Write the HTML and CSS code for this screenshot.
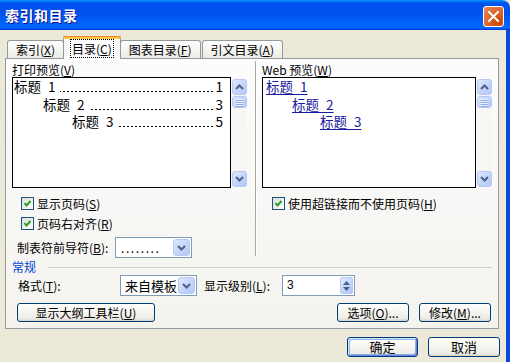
FILE: index.html
```html
<!DOCTYPE html>
<html lang="zh-CN">
<head>
  <meta charset="UTF-8" />
  <title>索引和目录</title>
  <link rel="stylesheet" href="styles.css">
</head>
<body>

  <div class="window">
    <div class="titlebar">
      <span class="title">索引和目录</span>
      <span class="close">
        <svg width="21" height="21" viewBox="0 0 21 21"><path d="M6 6 L15 15 M15 6 L6 15" stroke="#fff" stroke-width="2" stroke-linecap="square"/></svg>
      </span>
    </div>

    <div class="frame">
      <div class="tabs">
        <div class="tab">索引(<u>X</u>)</div>
        <div class="tab active"><span class="focus">目录(<u>C</u>)</span></div>
        <div class="tab">图表目录(<u>F</u>)</div>
        <div class="tab">引文目录(<u>A</u>)</div>
      </div>

      <div class="panel">
        <div class="columns">
          <div class="col col-print">
            <div class="label">打印预览(<u>V</u>)</div>
            <div class="preview">
              <div class="preview-box">
                <div class="toc-line"><span>标题 1</span><span class="leader"></span><span>1</span></div>
                <div class="toc-line lvl2"><span>标题 2</span><span class="leader"></span><span>3</span></div>
                <div class="toc-line lvl3"><span>标题 3</span><span class="leader"></span><span>5</span></div>
              </div>
              <div class="scrollbar">
                <span class="sb-btn"><svg width="9" height="6" viewBox="0 0 9 6"><path d="M1 5 L4.5 1.5 L8 5" fill="none" stroke="#4d6185" stroke-width="2"/></svg></span>
                <span class="sb-thumb"><i></i><i></i><i></i><i></i></span>
                <span class="sb-track"></span>
                <span class="sb-btn"><svg width="9" height="6" viewBox="0 0 9 6"><path d="M1 1 L4.5 4.5 L8 1" fill="none" stroke="#4d6185" stroke-width="2"/></svg></span>
              </div>
            </div>
            <label class="check first"><span class="box"><svg width="11" height="11" viewBox="0 0 11 11"><path d="M2.5 5 L4.5 7.5 L8.5 3" fill="none" stroke="#21a121" stroke-width="2"/></svg></span>显示页码(<u>S</u>)</label>
            <label class="check"><span class="box"><svg width="11" height="11" viewBox="0 0 11 11"><path d="M2.5 5 L4.5 7.5 L8.5 3" fill="none" stroke="#21a121" stroke-width="2"/></svg></span>页码右对齐(<u>R</u>)</label>
            <div class="field leader-field">
              <span class="field-label">制表符前导符(<u>B</u>):</span>
              <div class="select">
                <span class="select-value dots">........</span>
                <span class="drop"><svg width="9" height="6" viewBox="0 0 9 6"><path d="M1 1 L4.5 4.5 L8 1" fill="none" stroke="#4d6185" stroke-width="2"/></svg></span>
              </div>
            </div>
          </div>

          <div class="vsep"></div>

          <div class="col col-web">
            <div class="label">Web 预览(<u>W</u>)</div>
            <div class="preview">
              <div class="preview-box web">
                <div class="web-line"><a>标题 1</a></div>
                <div class="web-line lvl2"><a>标题 2</a></div>
                <div class="web-line lvl3"><a>标题 3</a></div>
              </div>
              <div class="scrollbar">
                <span class="sb-btn"><svg width="9" height="6" viewBox="0 0 9 6"><path d="M1 5 L4.5 1.5 L8 5" fill="none" stroke="#4d6185" stroke-width="2"/></svg></span>
                <span class="sb-thumb"><i></i><i></i><i></i><i></i></span>
                <span class="sb-track"></span>
                <span class="sb-btn"><svg width="9" height="6" viewBox="0 0 9 6"><path d="M1 1 L4.5 4.5 L8 1" fill="none" stroke="#4d6185" stroke-width="2"/></svg></span>
              </div>
            </div>
            <label class="check first"><span class="box"><svg width="11" height="11" viewBox="0 0 11 11"><path d="M2.5 5 L4.5 7.5 L8.5 3" fill="none" stroke="#21a121" stroke-width="2"/></svg></span>使用超链接而不使用页码(<u>H</u>)</label>
          </div>
        </div>

        <div class="group">
          <div class="group-title"><span>常规</span><span class="rule"></span></div>
          <div class="field format-row">
            <span class="field-label">格式(<u>T</u>):</span>
            <div class="select">
              <span class="select-value">来自模板</span>
              <span class="drop"><svg width="9" height="6" viewBox="0 0 9 6"><path d="M1 1 L4.5 4.5 L8 1" fill="none" stroke="#4d6185" stroke-width="2"/></svg></span>
            </div>
            <span class="level-label">显示级别(<u>L</u>):</span>
            <div class="spin">
              <span class="spin-value">3</span>
              <span class="spin-btn">
                <svg width="7" height="4" viewBox="0 0 7 4"><path d="M0 4 L3.5 0 L7 4 Z" fill="#4d6185"/></svg>
                <svg width="7" height="4" viewBox="0 0 7 4"><path d="M0 0 L3.5 4 L7 0 Z" fill="#4d6185"/></svg>
              </span>
            </div>
          </div>
          <div class="button-row">
            <button class="btn outline-btn">显示大纲工具栏(<u>U</u>)</button>
            <span class="spacer"></span>
            <button class="btn small-btn">选项(<u>O</u>)...</button>
            <button class="btn small-btn">修改(<u>M</u>)...</button>
          </div>
        </div>
      </div>

      <div class="footer">
        <button class="btn default">确定</button>
        <button class="btn cancel">取消</button>
      </div>
    </div>
  </div>

</body>
</html>
```

FILE: styles.css
```css
body {
  margin: 0;
  background: #ece9d8;
  font-family: "Noto Sans CJK SC", "DejaVu Sans", sans-serif;
  font-size: 12px;
  color: #000;
}

u {
  text-decoration: underline;
  text-underline-offset: 1px;
}

.window {
  width: 510px;
  height: 362px;
  overflow: hidden;
  background: #ece9d8;
}

/* Title bar */
.titlebar {
  height: 30px;
  display: flex;
  align-items: center;
  justify-content: space-between;
  padding: 0 6px 0 5px;
  border-top-right-radius: 8px;
  background: linear-gradient(to bottom, #0997ff 0%, #0053ee 10%, #0050ee 40%, #0066ff 88%, #0066ff 93%, #005bff 95%, #003dd7 97%, #003dd7 100%);
}

.title {
  color: #fff;
  font-size: 14px;
  font-weight: bold;
  letter-spacing: 0.5px;
  text-shadow: 1px 1px #0f1089;
}

.close {
  width: 21px;
  height: 21px;
  margin-top: 3px;
  box-sizing: border-box;
  border: 1px solid #fff;
  border-radius: 3px;
  background: radial-gradient(circle at 80% 80%, #cc4600 0%, #dc6527 50%, #e48a60 100%);
  display: flex;
  align-items: center;
  justify-content: center;
}

.close svg {
  margin: -1px;
}

/* Client area */
.frame {
  height: 332px;
  border-right: 4px solid #0a48dd;
  padding: 0 7px 0 5px;
}

.tabs {
  height: 28px;
  display: flex;
  align-items: flex-end;
  padding-left: 2px;
  position: relative;
  z-index: 1;
}

.tab {
  height: 17px;
  line-height: 17px;
  padding: 0 8px;
  border: 1px solid #919b9c;
  border-bottom: none;
  border-radius: 3px 3px 0 0;
  background: linear-gradient(#fff, #f3f3ef 60%, #ecebe5);
  white-space: nowrap;
  margin-right: 1px;
}

.tab.active {
  height: 20px;
  line-height: 19px;
  margin: 0 -1px -1px -2px;
  padding: 0 7px;
  border-top: 3px solid #ffc83c;
  background: #fcfcfe;
  position: relative;
}

.tab.active::before {
  content: "";
  position: absolute;
  left: -1px;
  right: -1px;
  top: -3px;
  height: 1px;
  background: #e68b2c;
  border-radius: 2px 2px 0 0;
}

.focus {
  outline: 1px dotted #000;
  outline-offset: 0;
  padding: 0 1px;
}

.panel {
  height: 271px;
  box-sizing: border-box;
  border: 1px solid #919b9c;
  background: linear-gradient(#fcfcfe, #f4f3ee);
  display: flex;
  flex-direction: column;
}

.columns {
  height: 201px;
  display: flex;
}

.col {
  padding-top: 4px;
  display: flex;
  flex-direction: column;
  flex: none;
  min-width: 0;
}

.col-print {
  width: 235px;
  padding-left: 6px;
}

.col-web {
  width: 230px;
  padding-left: 5px;
}

.vsep {
  flex: none;
  width: 0;
  margin: 2px 0 0 8px;
  height: 195px;
  border-left: 1px solid #aca899;
  border-right: 1px solid #fff;
}

.label {
  height: 14px;
  line-height: 14px;
  white-space: nowrap;
}

.preview {
  height: 111px;
  display: flex;
}

.preview-box {
  flex: 1;
  min-width: 0;
  overflow: hidden;
  border: 1px solid #000;
  background: #fff;
  padding: 0 7px 0 1px;
  font-size: 13.5px;
  line-height: 17.5px;
  word-spacing: 4px;
  margin-right: 1px;
}

.col-web .preview-box {
  padding: 0 4px 0 3px;
}

.toc-line {
  display: flex;
  white-space: nowrap;
}

.toc-line span {
  flex: none;
}

/* dotted tab leader between heading and page number */
.toc-line .leader {
  flex: 1 1 0;
  min-width: 0;
  margin: 0 2px 0 4px;
  background-image: radial-gradient(circle, #000 0.75px, transparent 1.1px);
  background-size: 4px 3px;
  background-repeat: repeat-x;
  background-position: right 0 top 12px;
}

.lvl2 {
  padding-left: 29px;
}

.lvl3 {
  padding-left: 58px;
}

.web .lvl2 {
  padding-left: 26px;
}

.web .lvl3 {
  padding-left: 54px;
}

.web-line a {
  color: #1a1aa0;
  text-decoration: underline;
  text-underline-offset: 2px;
}

/* XP scrollbar */
.scrollbar {
  flex: none;
  width: 15px;
  margin-top: 2px;
  height: 108px;
  background: #f7f6f2;
  display: flex;
  flex-direction: column;
}

.sb-btn,
.sb-thumb,
.drop {
  box-sizing: border-box;
  border: 1px solid #b6c8f3;
  border-radius: 3px;
  background: linear-gradient(135deg, #dde8fe, #c1d3fb 60%, #b3c8f5);
  display: flex;
  align-items: center;
  justify-content: center;
}

.sb-btn {
  height: 16px;
}

.sb-thumb {
  height: 12px;
  margin-top: 1px;
  flex-direction: column;
  gap: 1px;
}

.sb-thumb i {
  display: block;
  width: 7px;
  height: 1px;
  background: #eef4fe;
  box-shadow: 0 1px #8caae6;
}

.sb-track {
  flex: 1;
}

/* Checkboxes */
.check {
  display: flex;
  align-items: center;
  height: 13px;
  line-height: 13px;
  margin-top: 7px;
  padding-left: 9px;
  white-space: nowrap;
}

.check.first {
  margin-top: 9px;
}

.col-web .check {
  padding-left: 10px;
}

.box {
  flex: none;
  width: 13px;
  height: 13px;
  box-sizing: border-box;
  border: 1px solid #1c5180;
  background: linear-gradient(135deg, #dcdcd7, #fff);
  margin-right: 3px;
  display: flex;
  align-items: center;
  justify-content: center;
}

/* Fields */
.field {
  display: flex;
  align-items: center;
  white-space: nowrap;
}

.leader-field {
  margin-top: 7px;
}

.leader-field .field-label {
  width: 103px;
  padding-left: 5px;
  box-sizing: border-box;
}

.select {
  flex: none;
  width: 77px;
  height: 21px;
  box-sizing: border-box;
  border: 1px solid #7f9db9;
  background: #fff;
  display: flex;
  padding: 1px;
}

.select-value {
  flex: 1;
  line-height: 17px;
  padding-left: 3px;
  font-size: 13px;
}

.select-value.dots {
  letter-spacing: 1.6px;
  font-size: 12px;
  padding-left: 4px;
}

.drop {
  width: 17px;
}

/* Group */
.group-title {
  height: 12px;
  display: flex;
  align-items: center;
  padding: 0 6px;
  color: #0046d5;
}

.group-title .rule {
  flex: 1;
  height: 1px;
  margin-left: 12px;
  margin-top: 2px;
  background: #d0d0bf;
}

.format-row {
  margin-top: 3px;
  padding-left: 12px;
}

.format-row .field-label {
  width: 102px;
}

.level-label {
  width: 78px;
  margin-left: 7px;
}

.spin {
  width: 73px;
  height: 21px;
  box-sizing: border-box;
  border: 1px solid #7f9db9;
  background: #fff;
  display: flex;
  padding: 1px;
}

.spin-value {
  flex: 1;
  line-height: 17px;
  padding-left: 3px;
  font-family: "Liberation Sans", sans-serif;
}

.spin-btn {
  width: 13px;
  box-sizing: border-box;
  border: 1px solid #b6c8f3;
  border-radius: 2px;
  background: linear-gradient(135deg, #dde8fe, #c1d3fb 60%, #b3c8f5);
  display: flex;
  flex-direction: column;
  align-items: center;
  justify-content: center;
  gap: 2px;
}

/* Buttons */
.button-row {
  display: flex;
  margin-top: 7px;
  padding: 0 7px 0 11px;
  gap: 10px;
}

.spacer {
  flex: 1;
}

.btn {
  height: 19px;
  padding: 0;
  border: 1px solid #003c74;
  border-radius: 3px;
  background: linear-gradient(#fff, #f5f4ef 50%, #ecebe6 86%, #d6d0c5);
  font-family: "Noto Sans CJK SC", sans-serif;
  font-size: 12px;
  line-height: 16px;
  color: #000;
  white-space: nowrap;
}

.outline-btn {
  width: 138px;
}

.small-btn {
  width: 72px;
}

.footer {
  display: flex;
  justify-content: flex-end;
  gap: 10px;
  margin: 8px -1px 0 0;
}

.footer .btn {
  height: 20px;
  width: 71px;
  font-size: 13px;
}

.footer .btn.cancel {
  width: 72px;
}

.btn.default {
  box-shadow: inset 1px 1px #cee7ff, inset -1px -1px #6982ee, inset 2px 2px #98b8ea, inset -2px -2px #89ade4;
}
```
